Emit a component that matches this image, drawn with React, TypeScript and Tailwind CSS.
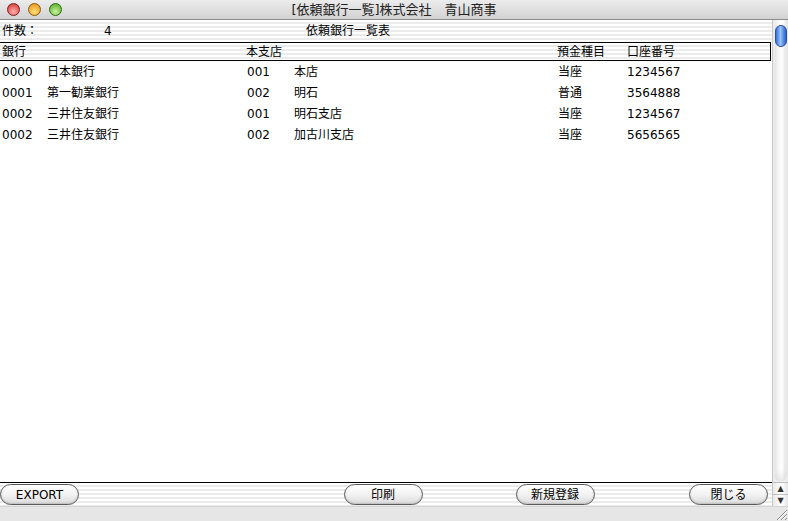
import React from 'react';

const rows = [
  { code: '0000', bank: '日本銀行', bcode: '001', branch: '本店', type: '当座', acct: '1234567' },
  { code: '0001', bank: '第一勧業銀行', bcode: '002', branch: '明石', type: '普通', acct: '3564888' },
  { code: '0002', bank: '三井住友銀行', bcode: '001', branch: '明石支店', type: '当座', acct: '1234567' },
  { code: '0002', bank: '三井住友銀行', bcode: '002', branch: '加古川支店', type: '当座', acct: '5656565' },
];

const stripes = 'bg-[repeating-linear-gradient(180deg,#ffffff_0px,#ffffff_2px,#ebebeb_2px,#ebebeb_4px)]';

function PillButton({ label }: { label: string }) {
  return (
    <button className="h-[21px] w-[79px] rounded-full border border-[#5a5a5a] bg-[linear-gradient(180deg,#ffffff_0%,#f2f2f2_50%,#dcdcdc_100%)] text-[12px] text-black shadow-[inset_0_-1px_2px_rgba(0,0,0,0.15)]">
      {label}
    </button>
  );
}

export default function App() {
  return (
    <div
      className="flex h-[521px] w-[788px] flex-col overflow-hidden bg-white text-[12px] text-black"
      style={{ fontFamily: '"DejaVu Sans", "Noto Sans CJK JP", sans-serif' }}
    >
      {/* title bar */}
      <div className="relative flex h-[20px] items-center border-b border-[#8c8c8c] bg-[linear-gradient(180deg,#ececec,#d2d2d2)]">
        <div className="flex gap-[8px] pl-[7px]">
          <div className="h-[13px] w-[13px] rounded-full border border-[#7a2020] bg-[radial-gradient(circle_at_50%_70%,#ffb0b0,#d42a2a)]" />
          <div className="h-[13px] w-[13px] rounded-full border border-[#8a5a10] bg-[radial-gradient(circle_at_50%_70%,#ffe07a,#e58a0c)]" />
          <div className="h-[13px] w-[13px] rounded-full border border-[#2e6a14] bg-[radial-gradient(circle_at_50%_70%,#c8f29a,#4aa61e)]" />
        </div>
        <div className="absolute inset-0 flex items-center justify-center text-[13px] text-[#222]">
          [依頼銀行一覧]株式会社　青山商事
        </div>
      </div>

      <div className="flex flex-1">
        {/* main column */}
        <div className="flex w-[772px] flex-col">
          <div className={`flex h-[22px] items-center ${stripes}`}>
            <span className="w-[104px] pl-[2px]">件数：</span>
            <span className="w-[202px]">4</span>
            <span>依頼銀行一覧表</span>
          </div>
          <div className={`mr-[1px] flex h-[19px] items-center border-y border-r border-black ${stripes}`}>
            <span className="w-[246px] pl-[2px]">銀行</span>
            <span className="w-[311px]">本支店</span>
            <span className="w-[70px]">預金種目</span>
            <span>口座番号</span>
          </div>
          <div className="flex flex-1 flex-col pt-[1px]">
            {rows.map((r, i) => (
              <div key={i} className="flex h-[20.8px] items-center">
                <span className="w-[47px] pl-[2px]">{r.code}</span>
                <span className="w-[200px]">{r.bank}</span>
                <span className="w-[47px]">{r.bcode}</span>
                <span className="w-[264px]">{r.branch}</span>
                <span className="w-[69px]">{r.type}</span>
                <span>{r.acct}</span>
              </div>
            ))}
          </div>
          <div className={`flex h-[24px] items-center justify-between border-t border-black pr-[4px] ${stripes}`}>
            <PillButton label="EXPORT" />
            <div className="flex gap-[93px] pl-[170px]">
              <PillButton label="印刷" />
              <PillButton label="新規登録" />
            </div>
            <PillButton label="閉じる" />
          </div>
        </div>

        {/* scrollbar */}
        <div className="flex w-[16px] flex-col border-l border-[#c8c8c8] bg-[linear-gradient(90deg,#e8e8e8,#fafafa_40%,#ffffff_60%,#e4e4e4)]">
          <div className="flex-1 px-[2px] pt-[5px]">
            <div className="h-full rounded-b-full pb-[8px] shadow-[inset_0_-6px_6px_rgba(0,0,0,0.08)]">
              <div className="h-[22px] w-[12px] rounded-full border border-[#2a4f9e] bg-[linear-gradient(90deg,#3a6fd6,#9cc4ff_45%,#5f95ea_70%,#2e5fc4)]" />
            </div>
          </div>
          <div className="flex h-[12px] items-center justify-center border-t border-[#bdbdbd] text-[8px] leading-none text-[#333]">▲</div>
          <div className="flex h-[12px] items-center justify-center border-t border-[#bdbdbd] text-[8px] leading-none text-[#333]">▼</div>
        </div>
      </div>

      {/* bottom strip */}
      <div className="flex h-[15px] justify-end border-t border-[#d4d4d4] bg-[#e6e6e6]">
        <svg width="15" height="14" viewBox="0 0 15 14">
          <path d="M4 13 L14 3 M8 13 L14 7 M12 13 L14 11" stroke="#8a8a8a" strokeWidth="1" />
          <path d="M5 13 L14 4 M9 13 L14 8" stroke="#ffffff" strokeWidth="1" />
        </svg>
      </div>
    </div>
  );
}
